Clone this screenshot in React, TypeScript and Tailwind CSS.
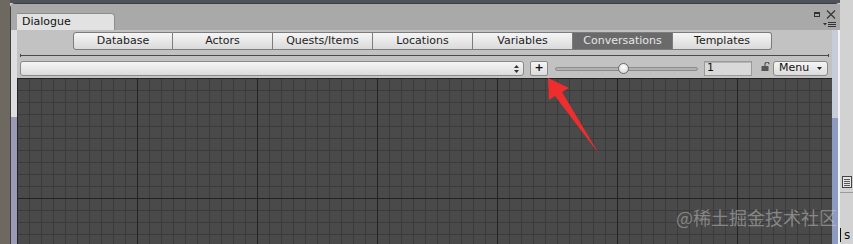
import { Fragment } from "react";

const tabs = [
	"Database",
	"Actors",
	"Quests/Items",
	"Locations",
	"Variables",
	"Conversations",
	"Templates",
];

const active = "Conversations";

function ToolbarTabs() {
	return (
		<div className="ml-[56px] flex h-[18px]">
			{tabs.map((tab, i) => {
				const first = i === 0;
				const last = i === tabs.length - 1;
				const isActive = tab === active;
				return (
					<div
						key={tab}
						className={`flex h-[18px] items-center justify-center border-[#7c7c7c] border-y text-[11px] ${
							last ? "w-[99px]" : "w-[100px]"
						} ${first ? "rounded-l-[3px] border-l" : ""} ${
							last ? "rounded-r-[3px] border-r" : "border-r"
						} ${
							isActive
								? "bg-[#6a6a6a] text-[#e6e6e6]"
								: "bg-[linear-gradient(to_bottom,#f5f5f5,#dadada)] text-[#1c1c1c]"
						}`}
					>
						{tab}
					</div>
				);
			})}
		</div>
	);
}

function WindowIcons() {
	return (
		<div className="mr-[4px] flex flex-col items-end gap-[3px] pt-[6px]">
			<div className="flex items-center gap-[6px]">
				<div className="h-[5px] w-[6px] border border-[#333] border-t-2" />
				<svg width="10" height="9" viewBox="0 0 10 9">
					<path d="M1 0.5 L9 8.5 M9 0.5 L1 8.5" stroke="#333" strokeWidth="1.1" />
				</svg>
			</div>
			<svg width="13" height="5" viewBox="0 0 13 5">
				<path d="M0 1 L4 1 L2 3.5 Z" fill="#333" />
				<path d="M5 0.5 H13 M5 2.5 H13 M5 4.5 H13" stroke="#333" strokeWidth="1" />
			</svg>
		</div>
	);
}

function LockIcon() {
	return (
		<svg width="9" height="9" viewBox="0 0 9 9" className="mt-[-4px]">
			<path d="M4 4 V2.2 A2 2 0 0 1 8 2.2" stroke="#555" strokeWidth="1.2" fill="none" />
			<rect x="0.5" y="4" width="7" height="5" fill="#555" />
		</svg>
	);
}

function SecondRow() {
	return (
		<div className="flex h-[15px] items-center pl-[3px]">
			<div className="flex h-[15px] w-[504px] items-center justify-end rounded-[3px] border border-[#8a8a8a] bg-[linear-gradient(to_bottom,#f5f5f5,#dcdcdc)] pr-[4px]">
				<svg width="5" height="8" viewBox="0 0 5 8">
					<path d="M0 3 L2.5 0 L5 3 Z M0 5 L2.5 8 L5 5 Z" fill="#333" />
				</svg>
			</div>
			<div className="ml-[6px] flex h-[15px] w-[18px] items-center justify-center rounded-[2px] border border-[#8a8a8a] bg-[linear-gradient(to_bottom,#f5f5f5,#dcdcdc)] font-bold text-[11px] text-[#111]">
				+
			</div>
			<div className="relative ml-[7px] flex h-[15px] w-[143px] items-center">
				<div className="h-[4px] w-full rounded-full border border-[#8d8d8d] bg-[#b0b0b0]" />
				<div className="absolute left-[63px] top-[2px] h-[11px] w-[11px] rounded-full border border-[#6a6a6a] bg-[radial-gradient(circle_at_50%_35%,#ffffff,#cfcfcf)]" />
			</div>
			<div className="ml-[6px] flex h-[15px] w-[48px] items-center border border-[#9a9a9a] bg-[#d9d9d9] pl-[2px] text-[11px] text-[#111] shadow-[inset_0_1px_0_#b5b5b5]">
				1
			</div>
			<div className="ml-[9px] flex w-[11px] justify-start">
				<LockIcon />
			</div>
			<div className="ml-[1px] flex h-[15px] w-[55px] items-center justify-between rounded-[3px] border border-[#8a8a8a] bg-[linear-gradient(to_bottom,#f5f5f5,#dcdcdc)] pl-[5px] pr-[5px] text-[11px] text-[#111]">
				<span>Menu</span>
				<svg width="5" height="3" viewBox="0 0 5 3">
					<path d="M0 0 H5 L2.5 3 Z" fill="#222" />
				</svg>
			</div>
		</div>
	);
}

function Divider() {
	return (
		<div className="ml-[3px] flex h-[3px] w-[809px] items-center">
			<div className="h-[3px] w-px bg-[#444]" />
			<div className="h-px flex-1 bg-[#4a4a4a]" />
			<div className="h-[3px] w-px bg-[#444]" />
		</div>
	);
}

function Grid() {
	return (
		<div className="flex-1 bg-[#4a4a4a] [background-image:linear-gradient(to_right,#222222_1px,transparent_1px),linear-gradient(to_bottom,#222222_1px,transparent_1px),linear-gradient(to_right,#3b3b3b_1px,transparent_1px),linear-gradient(to_bottom,#3b3b3b_1px,transparent_1px)] [background-position:0_0] [background-size:120px_120px,120px_120px,12px_12px,12px_12px]" />
	);
}

export default function App() {
	return (
		<div className="relative flex h-[244px] w-[853px] overflow-hidden bg-[#d2d2d2] font-['DejaVu_Sans',sans-serif]">
			<div className="w-[10px] bg-[#6d6961]" />

			<div className="flex w-[830px] flex-col">
				<div className="h-[3px] bg-[#4d525b]" />
				<div className="flex flex-1 flex-col rounded-t-[5px] border-[#3e3e3e] border-t border-l bg-[#c2c2c2]">
					<div className="flex h-[26px] items-end justify-between bg-[#a9a9a9] pl-[6px]">
						<div className="flex h-[17px] w-[98px] items-center rounded-tr-[4px] border-[#8c8c8c] border-t border-r bg-[#e2e2e2] pl-[5px] text-[11px] text-[#111]">
							Dialogue
						</div>
						<div className="self-start">
							<WindowIcons />
						</div>
					</div>

					<div className="flex flex-1">
						<div className="flex w-[6px] flex-col">
							<div className="h-[87px] bg-[#dedede]" />
							<div className="flex-1 bg-[#9a9ab6]" />
						</div>
						<div className="flex flex-1 flex-col">
							<div className="pt-[2px]">
								<ToolbarTabs />
							</div>
							<div className="mt-[4px]">
								<Divider />
							</div>
							<div className="mt-[4px]">
								<SecondRow />
							</div>
							<div className="mt-[2px] flex flex-1">
								<Grid />
							</div>
						</div>
						<div className="flex w-[8px]">
							<div className="flex w-[6px] flex-col">
								<div className="h-[88px] bg-[#c6ccd8]" />
								<div className="flex-1 bg-[#8e9bc0]" />
							</div>
							<div className="w-[2px] bg-[#f2f2f2]" />
						</div>
					</div>
				</div>
			</div>

			<div className="flex w-[13px] flex-col">
				<div className="h-[176px]" />
				<div className="ml-[2px] flex h-[12px] w-[10px] flex-col justify-center gap-[1px] border border-[#444] bg-[#e6e6e6] px-[1px]">
					{[0, 1, 2, 3].map((i) => (
						<Fragment key={i}>
							<div className="h-px bg-[#555]" />
						</Fragment>
					))}
				</div>
				<div className="mt-[4px] h-px bg-[#9c9c9c]" />
				<div className="flex-1" />
				<div className="mb-[2px] flex h-[14px] items-center text-[12px] text-[#111]">
					<div className="h-[14px] w-px bg-[#111]" />
					<span className="ml-[3px]">s</span>
				</div>
			</div>

			<svg
				className="pointer-events-none absolute top-0 left-0"
				width="853"
				height="244"
				viewBox="0 0 853 244"
			>
				<polygon
					points="548,78 569,88 562,92 599,154 555,96 549,100"
					fill="#ef2d2d"
				/>
			</svg>

			<div className="pointer-events-none absolute top-[206px] left-[676px] font-['Noto_Sans_CJK_SC',sans-serif] text-[18px] text-[rgba(215,215,215,0.45)] leading-[22px]">
				@稀土掘金技术社区
			</div>
		</div>
	);
}
